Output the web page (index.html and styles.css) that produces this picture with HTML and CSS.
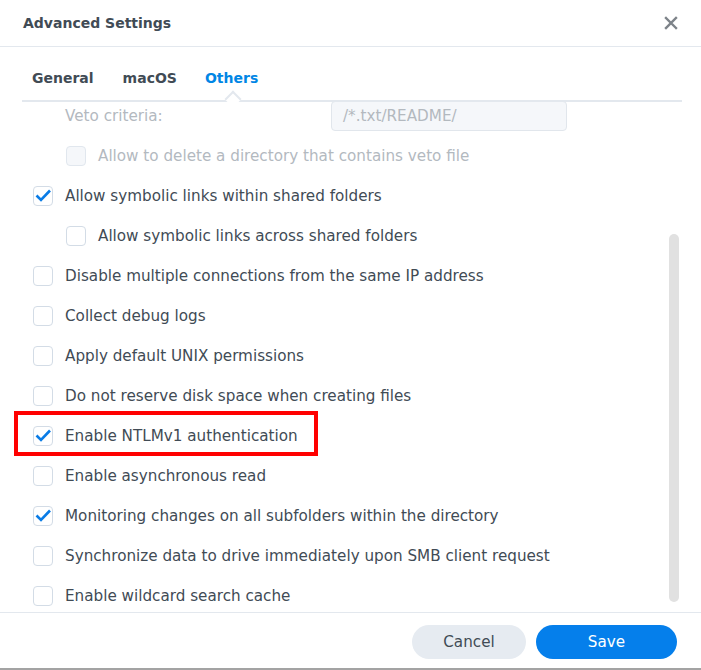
FILE: index.html
```html
<!DOCTYPE html>
<html>
<head>
<meta charset="utf-8">
<link rel="stylesheet" href="styles.css">
</head>
<body>
<div class="dialog">
  <div class="header">
    <span class="title">Advanced Settings</span>
    <svg class="close" width="14" height="14" viewBox="0 0 14 14"><path d="M2 2L12 12M12 2L2 12" stroke="#7d8389" stroke-width="2.4" stroke-linecap="square"/></svg>
  </div>
  <div class="tabs">
    <span class="tab">General</span>
    <span class="tab">macOS</span>
    <span class="tab active">Others</span>
  </div>
  <div class="content">
    <div class="list">
      <div class="row veto">
        <span class="label disabled veto-label">Veto criteria:</span>
        <div class="input">/*.txt/README/</div>
      </div>
      <div class="row sub">
        <span class="cb disabled-cb"></span><span class="label disabled">Allow to delete a directory that contains veto file</span>
      </div>
      <div class="row">
        <span class="cb"><svg width="20" height="20" viewBox="0 0 20 20"><path d="M3.5 9.5L8 14L17 4.5" fill="none" stroke="#0a7ce6" stroke-width="2.6"/></svg></span><span class="label">Allow symbolic links within shared folders</span>
      </div>
      <div class="row sub">
        <span class="cb"></span><span class="label">Allow symbolic links across shared folders</span>
      </div>
      <div class="row">
        <span class="cb"></span><span class="label">Disable multiple connections from the same IP address</span>
      </div>
      <div class="row">
        <span class="cb"></span><span class="label">Collect debug logs</span>
      </div>
      <div class="row">
        <span class="cb"></span><span class="label">Apply default UNIX permissions</span>
      </div>
      <div class="row">
        <span class="cb"></span><span class="label">Do not reserve disk space when creating files</span>
      </div>
      <div class="row highlighted">
        <span class="cb"><svg width="20" height="20" viewBox="0 0 20 20"><path d="M3.5 9.5L8 14L17 4.5" fill="none" stroke="#0a7ce6" stroke-width="2.6"/></svg></span><span class="label">Enable NTLMv1 authentication</span>
        <span class="redbox"></span>
      </div>
      <div class="row">
        <span class="cb"></span><span class="label">Enable asynchronous read</span>
      </div>
      <div class="row">
        <span class="cb"><svg width="20" height="20" viewBox="0 0 20 20"><path d="M3.5 9.5L8 14L17 4.5" fill="none" stroke="#0a7ce6" stroke-width="2.6"/></svg></span><span class="label">Monitoring changes on all subfolders within the directory</span>
      </div>
      <div class="row">
        <span class="cb"></span><span class="label">Synchronize data to drive immediately upon SMB client request</span>
      </div>
      <div class="row">
        <span class="cb"></span><span class="label">Enable wildcard search cache</span>
      </div>
    </div>
    <div class="thumb"></div>
  </div>
  <div class="footer">
    <button class="btn cancel">Cancel</button>
    <button class="btn save">Save</button>
  </div>
</div>
</body>
</html>
```
FILE: styles.css
```css
html, body {
  margin: 0;
  padding: 0;
  background: #ffffff;
}
body {
  font-family: "DejaVu Sans", Verdana, sans-serif;
  color: #414b55;
}
.dialog {
  width: 701px;
  height: 670px;
  box-sizing: border-box;
  border-bottom: 2px solid #a3a3a3;
  display: flex;
  flex-direction: column;
  background: #fff;
}
.header {
  height: 46px;
  border-bottom: 1px solid #e3e8ee;
  display: flex;
  align-items: center;
  justify-content: space-between;
  padding: 0 23px 0 23px;
  flex: none;
}
.title {
  font-weight: bold;
  font-size: 14px;
  color: #414b55;
}
.close {
  display: block;
}
.tabs {
  margin: 0 19px 0 22px;
  height: 55px;
  border-bottom: 2px solid #e3e8ee;
  display: flex;
  align-items: center;
  gap: 29px;
  padding-left: 10px;
  padding-top: 9px;
  flex: none;
  box-sizing: border-box;
}
.tab {
  font-weight: bold;
  font-size: 14px;
  color: #414b55;
  position: relative;
}
.tab.active {
  color: #0086e5;
  left: -1px;
}
.tab.active::after {
  content: "";
  position: absolute;
  left: 50%;
  bottom: -19px;
  width: 10px;
  height: 10px;
  margin-left: -5px;
  background: #fff;
  border-left: 2px solid #e3e8ee;
  border-top: 2px solid #e3e8ee;
  transform: rotate(45deg);
}
.content {
  position: relative;
  height: 510px;
  overflow: hidden;
  flex: none;
}
.list {
  margin-top: -6px;
  display: flex;
  flex-direction: column;
}
.row {
  height: 40px;
  display: flex;
  align-items: center;
  padding-left: 33px;
  position: relative;
  font-size: 15.2px;
}
.row.sub {
  padding-left: 66px;
}
.row.veto {
  padding-left: 65px;
}
.veto-label {
  width: 266px;
  flex: none;
}
.cb {
  width: 20px;
  height: 20px;
  box-sizing: border-box;
  border: 1px solid #d3dce6;
  border-radius: 4px;
  margin-right: 12px;
  flex: none;
  position: relative;
  background: #fff;
}
.cb svg {
  position: absolute;
  left: -1px;
  top: -1px;
}
.cb.disabled-cb {
  background: #f5f7fa;
  border-color: #e1e7ee;
}
.label {
  white-space: nowrap;
  color: #414b55;
}
.label.disabled {
  color: #b3b9bf;
}
.input {
  width: 236px;
  height: 30px;
  box-sizing: border-box;
  border: 1px solid #e1e6ec;
  border-radius: 4px;
  background: #f5f7fa;
  color: #b3b9bf;
  font-size: 15.2px;
  line-height: 28px;
  padding-left: 11px;
}
.redbox {
  position: absolute;
  left: 14px;
  top: -5px;
  width: 304px;
  height: 45px;
  box-sizing: border-box;
  border: 4px solid #ff0000;
}
.thumb {
  position: absolute;
  left: 669px;
  top: 132px;
  width: 10px;
  height: 368px;
  border-radius: 5px;
  background: #e1e1e1;
}
.footer {
  flex: 1;
  border-top: 1px solid #e3e8ee;
  display: flex;
  align-items: center;
  justify-content: flex-end;
  gap: 10px;
  padding-right: 24px;
  padding-top: 2px;
}
.btn {
  height: 34px;
  border: none;
  border-radius: 17px;
  font-family: "DejaVu Sans", Verdana, sans-serif;
  font-size: 15.2px;
  padding: 0;
}
.cancel {
  width: 114px;
  background: #e6ebf1;
  color: #414b55;
}
.save {
  width: 141px;
  background: #057feb;
  color: #ffffff;
}
```
